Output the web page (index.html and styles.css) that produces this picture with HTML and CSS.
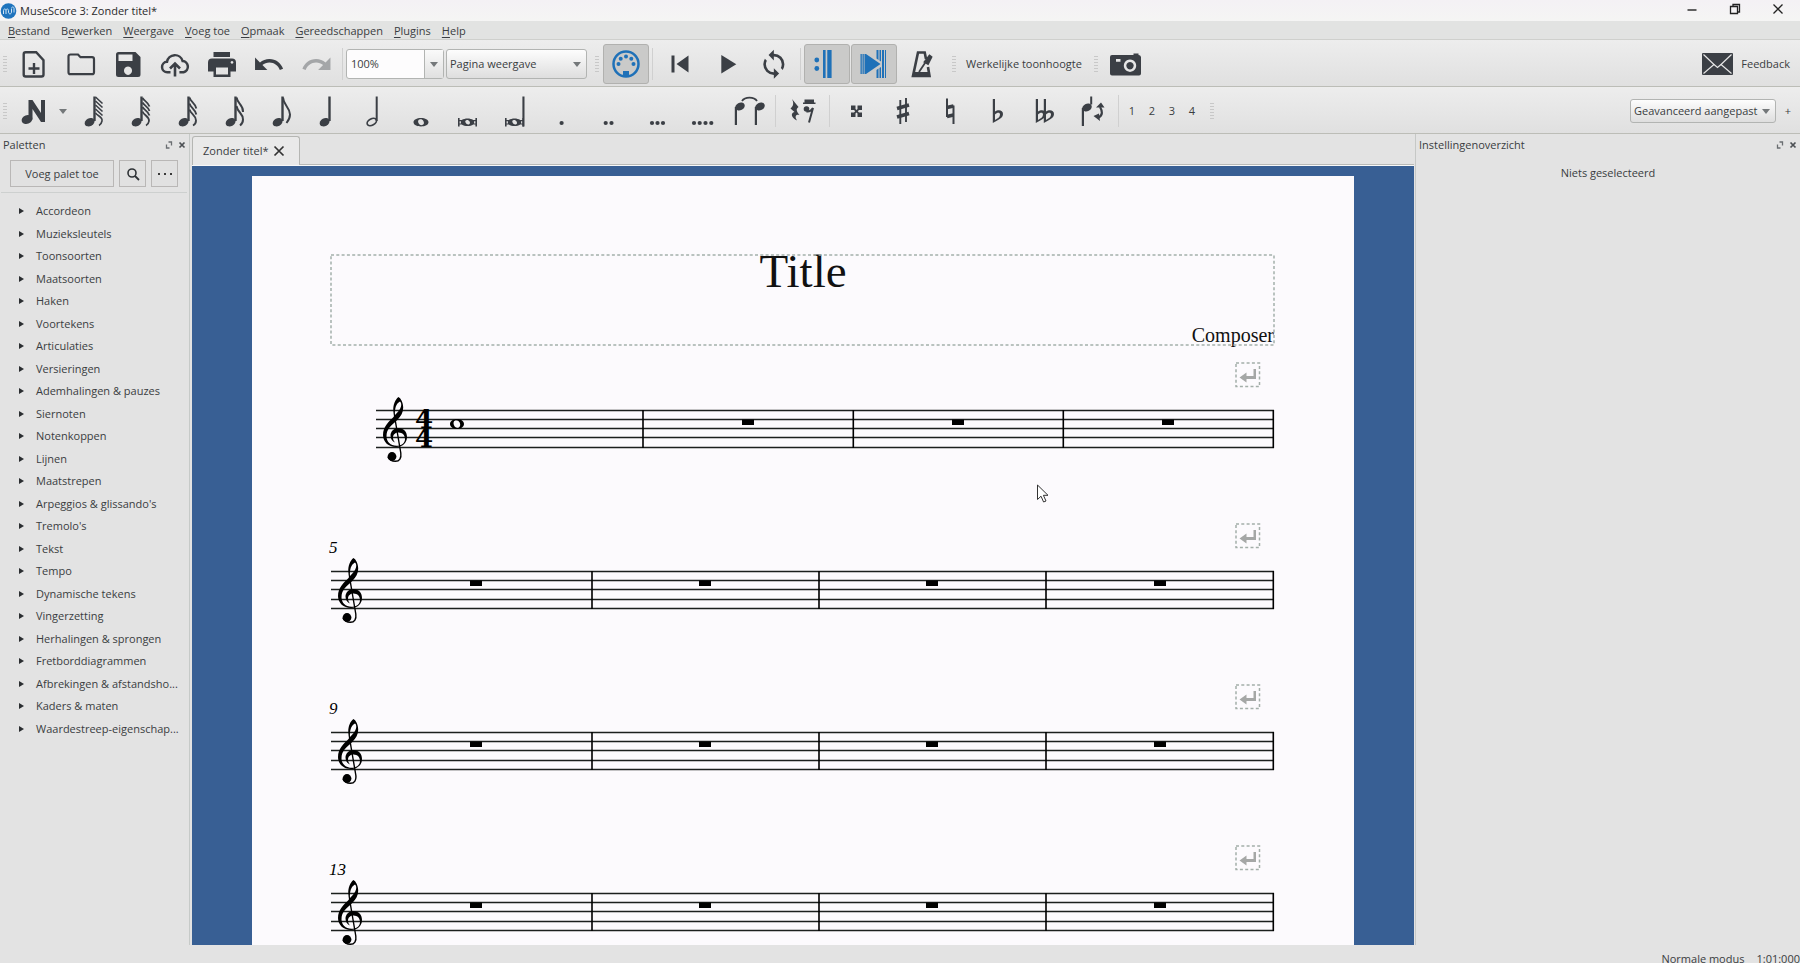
FILE: index.html
```html
<!DOCTYPE html>
<html lang="nl">
<head>
<meta charset="utf-8">
<title>MuseScore 3: Zonder titel*</title>
<link rel="stylesheet" href="styles.css">
</head>
<body>
<svg class="defs" aria-hidden="true">
  <symbol id="head" viewBox="0 0 47 46"><ellipse cx="18.600" cy="34.200" rx="5.200" ry="3.900" transform="rotate(-28 18.600 34.200)"/><path d="M22.300 8.500h2.400V33h-2.400z"/></symbol>
  <symbol id="brevis" viewBox="0 0 47 46"><path fill-rule="evenodd" d="M11 30h1.600v2h2.200c3-2 8.500-2 11.400 0h2.200v-2H30v8.500h-1.600v-2h-2.200c-3 2-8.400 2-11.400 0h-2.200v2H11zM12.600 33.200v2.200h1.300v-2.200zM27.100 33.200v2.200h1.300v-2.200zM19.800 32c-1.600.3-1.900 1.500-1.100 2.700.7 1.200 1.700 1.900 2.900 1.700 1.500-.3 1.700-1.600 1-2.800-.7-1.100-1.600-1.800-2.800-1.600z"/></symbol>
  <symbol id="dock" viewBox="0 0 8 8"><path d="M3.500 1h3v3.500M4.500 7H1.500V3.500" fill="none" stroke="#6a6e71" stroke-width="1.300"/></symbol>
  <symbol id="cross" viewBox="0 0 8 8"><path d="M1.500 1.500l5 5M6.500 1.500l-5 5" stroke="#4c5054" stroke-width="1.700"/></symbol>
  <symbol id="flat" viewBox="0 0 12 26"><path d="M.8 1h2.200v12.500c3-2 8-1.800 8 2.500 0 4.500-5.500 6-10.200 9zM3 16.500v5.500c2.800-1.500 5-3 5-5.500 0-2.500-3-2.200-5 0z" fill-rule="evenodd"/></symbol>
  <symbol id="clef" viewBox="0 0 24 66">
    <path fill-rule="evenodd" d="M15.500 0C12 2.500 10 8 10.300 13.500c.1 2 .4 4 .7 6C6 24.500 0 29.500 0 38c0 7 5.500 12 13 12 6.500 0 11-4 11-10 0-5.500-3.500-9-8.500-9-4.500 0-8 3.500-8 7.500 0 3.500 2 6 4.500 7-1.500-1.700-2-3.500-2-5 0-3 2.500-5 5.500-5 4 0 6.500 2.800 6.500 6.500 0 4-3.500 6.800-8.500 6.800C7.500 48.800 3.500 44.500 3.500 39.500 3.500 31.500 8.500 28.500 14.300 23c3.700-4 5.900-7.500 5.900-12.500 0-5-2.200-9-4.700-10.500zM17 4.500c1.300 1 1.500 3 1 5-.7 3-3.500 6-6 8.500-.4-6.500 1-11.500 5-13.500z"/>
    <path d="M11.500 19l6.300 37c.7 5-1.300 8.300-5.300 8.300-3.500 0-6.500-1.800-7.500-4.300" fill="none" stroke="#000" stroke-width="1.400"/>
    <circle cx="9" cy="59.500" r="4.400"/>
  </symbol>
  <symbol id="break" viewBox="0 0 26 26"><rect x="1" y="1" width="23.500" height="23.500" fill="none" stroke="#a3aea9" stroke-width="1.500" stroke-dasharray="3 2.300"/><path d="M4.500 15.500l7-5v3.500h7V7h2.500v10h-9.500v3.500z" fill="#a5a7a6"/></symbol>
  <symbol id="later" viewBox="0 0 944 161">
    <path d="M0 64.500h943M0 73.500h943M0 82.500h943M0 92.500h943M0 101.500h943" stroke="#1b1f1d" stroke-width="1.300"/>
    <path d="M261 64v38M488 64v38M715 64v38M942.300 64v38" stroke="#000" stroke-width="1.600"/>
    <path d="M139 73.500h12v5.500h-12zM368 73.500h12v5.500h-12zM595 73.500h12v5.500h-12zM823 73.500h12v5.500h-12z"/>
    <use href="#clef" x="7" y="51" width="24" height="66"/>
    <use href="#break" x="904" y="16" width="26" height="26"/>
  </symbol>
</svg>

<header class="titlebar">
  <svg class="logo" width="17" height="16" viewBox="0 0 17 16"><circle cx="8.500" cy="8" r="7.800" fill="#1f74bd"/><path d="M3.500 11V7.500c0-2 2.500-2 2.500 0V11M6 7.500c0-2 2.500-2 2.500 0v1.500c0 2.500 3 2.500 3 0V6M11.500 5.500c0-2 2.500-2 2.500 0V9.500" fill="none" stroke="#cfe4f5" stroke-width="1"/></svg>
  <h1 class="app-title">MuseScore 3: Zonder titel*</h1>
  <div class="window-buttons">
    <button aria-label="Minimaliseren"><svg width="12" height="12"><path d="M1.500 7h9" stroke="#222" stroke-width="1.400"/></svg></button>
    <button aria-label="Herstellen"><svg width="12" height="12"><path d="M1.500 3.500h7v7h-7zM4 3.500V1.500h6.500V9H9" fill="none" stroke="#222" stroke-width="1.300"/></svg></button>
    <button aria-label="Sluiten"><svg width="12" height="12"><path d="M1.500 1.500l9 9M10.500 1.500l-9 9" stroke="#222" stroke-width="1.300"/></svg></button>
  </div>
</header>

<nav class="menubar">
  <button><u>B</u>estand</button><button>B<u>e</u>werken</button><button><u>W</u>eergave</button><button><u>V</u>oeg toe</button><button><u>O</u>pmaak</button><button><u>G</u>ereedschappen</button><button><u>P</u>lugins</button><button><u>H</u>elp</button>
</nav>

<div class="toolbar">
  <i class="handle"></i>
  <button class="tool" aria-label="Nieuw"><svg viewBox="0 0 47 46"><g fill="none" stroke="#3b3f45" stroke-width="2.400"><path d="M15.700 11.200h10.500l7.300 8v14.300a2 2 0 0 1-2 2H15.700a2 2 0 0 1-2-2V13.200a2 2 0 0 1 2-2z"/><path d="M24 22v11M18.500 27.500h11"/></g></svg></button>
  <button class="tool" aria-label="Openen"><svg viewBox="0 0 47 46"><path d="M13.500 13.500h7.500l2.500 2.700h11.500a2 2 0 0 1 2 2v13a2 2 0 0 1-2 2H13.500a2 2 0 0 1-2-2V15.500a2 2 0 0 1 2-2z" fill="none" stroke="#3b3f45" stroke-width="2.200"/></svg></button>
  <button class="tool" aria-label="Opslaan"><svg viewBox="0 0 47 46"><path fill-rule="evenodd" d="M14.500 11h17l5 5v17.500a2.500 2.500 0 0 1-2.500 2.500H14.500a2.500 2.500 0 0 1-2.500-2.500v-20a2.500 2.500 0 0 1 2.500-2.500zM14.500 13.500v6.500h14v-6.500zM24 25.500a4 4.200 0 1 0 .01 0z"/></svg></button>
  <button class="tool" aria-label="Online opslaan"><svg viewBox="0 0 47 46"><path d="M19.500 31.200h-3a5.200 5.200 0 0 1-.5-10.400 8 8 0 0 1 15.600-.8 5.700 5.700 0 0 1 1 11.200h-4.200" fill="none" stroke="#3b3f45" stroke-width="2.500"/><path d="M24 35.500V23M19 27.500l5-5 5 5" fill="none" stroke="#3b3f45" stroke-width="2.600"/></svg></button>
  <button class="tool" aria-label="Afdrukken"><svg viewBox="0 0 47 46"><path fill-rule="evenodd" d="M15.500 11h16.500v5H15.500zM14 17.500h20a4 4 0 0 1 4 4v9h-5.500v5.500h-17v-5.500H10v-9a4 4 0 0 1 4-4zM18 26.500v7h12v-7zM34 20a1.400 1.400 0 1 0 .01 0z"/></svg></button>
  <button class="tool" aria-label="Ongedaan maken"><svg viewBox="0 0 47 46"><path transform="translate(7.300 7) scale(1.370)" d="M12.500 8C9.850 8 7.450 9 5.600 10.600L2 7v9h9l-3.620-3.620C8.770 11.220 10.540 10.500 12.500 10.500c3.540 0 6.550 2.310 7.600 5.500l2.370-.78C21.080 11.030 17.150 8 12.500 8z"/></svg></button>
  <button class="tool" aria-label="Opnieuw"><svg viewBox="0 0 47 46"><path fill="#a4a6a8" transform="translate(41.200 7) scale(-1.370 1.370)" d="M12.500 8C9.850 8 7.450 9 5.600 10.600L2 7v9h9l-3.620-3.620C8.770 11.220 10.540 10.500 12.500 10.500c3.540 0 6.550 2.310 7.600 5.500l2.370-.78C21.080 11.030 17.150 8 12.500 8z"/></svg></button>
  <i class="sep"></i>
  <div class="zoom"><input type="text" value="100%" aria-label="Zoom"><button class="drop" aria-label="Zoomniveaus"></button></div>
  <label class="pick view"><select aria-label="Weergave"><option>Pagina weergave</option></select></label>
  <i class="handle far"></i>
  <button class="tool on" aria-label="MIDI-invoer"><svg viewBox="0 0 46 46"><circle cx="23" cy="23" r="12.500" fill="none" stroke="#1f71b8" stroke-width="2.500"/><g fill="#1f71b8"><circle cx="15.500" cy="23" r="2"/><circle cx="17.700" cy="17.700" r="2"/><circle cx="23" cy="15.500" r="2"/><circle cx="28.300" cy="17.700" r="2"/><circle cx="30.500" cy="23" r="2"/><path d="M20 30h6v5.500h-6z"/></g></svg></button>
  <i class="sep"></i>
  <button class="tool" aria-label="Terugspoelen"><svg viewBox="0 0 47 46"><path d="M15.500 14.500h3v17h-3zM32.500 14.500v17L20.500 23z"/></svg></button>
  <button class="tool" aria-label="Afspelen"><svg viewBox="0 0 47 46"><path d="M18.300 14l15 9.300-15 9.300z"/></svg></button>
  <button class="tool" aria-label="Lus"><svg viewBox="0 0 47 46"><path transform="translate(8 7.500) scale(1.320)" d="M12 18a6 6 0 0 1-6-6c0-1 .25-1.970.7-2.800L5.240 7.740A7.900 7.900 0 0 0 4 12a8 8 0 0 0 8 8v3l4-4-4-4zM12 4V1L8 5l4 4V6a6 6 0 0 1 6 6c0 1-.25 1.970-.7 2.800l1.460 1.460A7.900 7.900 0 0 0 20 12a8 8 0 0 0-8-8z"/></svg></button>
  <i class="sep"></i>
  <button class="tool on" aria-label="Herhalingen"><svg viewBox="0 0 46 46"><g fill="#1f71b8"><circle cx="12.800" cy="19" r="2.400"/><circle cx="12.800" cy="27.500" r="2.400"/><path d="M19 9h2.600v28H19zM23.300 9h4.300v28h-4.300z"/></g></svg></button>
  <button class="tool on next" aria-label="Meeschuiven"><svg viewBox="0 0 46 46"><g fill="#1f71b8"><path d="M15 13l14.500 10L15 33zM9.500 13h1.300v20H9.500zM11.500 13h1.300v20h-1.300zM13.500 13h1.500v20h-1.500zM25.500 9h2v10l-2-1.500zM28.500 9h1.500v11.500l-1.500-1zM25.500 29l2-1.500V37h-2zM28.500 27l1.500-1v11h-1.500zM31 9h2v28h-2zM34 9h1v28h-1z"/></g></svg></button>
  <button class="tool" aria-label="Metronoom"><svg viewBox="0 0 47 46"><path fill="none" stroke="#3b3f45" stroke-width="2.600" d="M29 18l-1.300-6.500H21L16 35h16.500L31 26"/><path d="M22 31l8-12M32.500 14.500l2 1.500-3.500 7-3.500-2z" stroke="#3b3f45" stroke-width="1.800"/><path d="M17 31h14v5H17z"/></svg></button>
  <i class="handle far"></i>
  <button class="text-tool">Werkelijke toonhoogte</button>
  <i class="handle far"></i>
  <button class="tool" aria-label="Schermafdruk"><svg viewBox="0 0 47 46"><path fill-rule="evenodd" d="M10 14h21.500v-1.500h5V14a2.500 2.500 0 0 1 2.500 2v16.500a2 2 0 0 1-2 2H10a2 2 0 0 1-2-2V16a2 2 0 0 1 2-2zM14 18v2.800h4.500V18zM28 18.500a6.200 6.200 0 1 0 .01 0zM28 21a3.700 3.700 0 1 1-.01 0z"/></svg></button>
  <button class="feedback"><svg width="31" height="22" viewBox="0 0 31 22"><rect width="31" height="22" rx="1"/><path d="M1.500 1.500L12 11.500 1.500 20.500M29.500 1.500L19 11.500l10.500 9M12 11.500l3.500 3 3.500-3" fill="none" stroke="#e6e6e6" stroke-width="1.200"/></svg>Feedback</button>
</div>

<div class="toolbar">
  <i class="handle"></i>
  <button class="tool input" aria-label="Nootinvoer"><svg viewBox="0 0 47 46"><ellipse cx="17" cy="31.500" rx="5.500" ry="4.300" transform="rotate(-20 17 31.500)"/><path d="M18.500 12h4l8.500 13V12h4v22h-4l-8.500-13v10.500h-4z"/></svg></button>
  <button class="drop small" aria-label="Invoermodus"></button>
  <button class="tool" aria-label="128e"><svg viewBox="0 0 47 46"><use href="#head"/><path d="M24.500 9l7 6.500M24.500 13l7 6.500M24.500 17l7 6.500M24.500 21l7 6.500M24.500 25c2 3 7.500 4 6.500 8-.3 1.500-1 3.500-3 4.500" fill="none" stroke="#3b3f45" stroke-width="1.600"/></svg></button>
  <button class="tool" aria-label="64e"><svg viewBox="0 0 47 46"><use href="#head"/><path d="M24.500 10c1.500 3 5.500 4 7 8.500M24.500 14.500c1.500 3 5.500 4 7 8.500M24.500 19c1.500 3 5.500 4 7 8.500M24.500 23.500c1.500 4 7 5 6.500 9.500-.2 1.500-1 3.500-3 4.500" fill="none" stroke="#3b3f45" stroke-width="1.800"/></svg></button>
  <button class="tool" aria-label="32e"><svg viewBox="0 0 47 46"><use href="#head"/><path d="M24.500 9.500c1 4.500 5.500 5 6.800 11M24.500 15.500c1 4.500 5.500 5 6.800 11M24.500 21.500c1 4.500 6.500 5.500 6.500 11 0 2-1 4-3 5" fill="none" stroke="#3b3f45" stroke-width="1.900"/></svg></button>
  <button class="tool" aria-label="16e"><svg viewBox="0 0 47 46"><use href="#head"/><path d="M24.500 9.500c1 6.500 7 7 6.500 14.500M24.500 18c1 6.500 6.500 7 6.500 13.500 0 2.500-1 4.500-3 6" fill="none" stroke="#3b3f45" stroke-width="2"/></svg></button>
  <button class="tool" aria-label="8e"><svg viewBox="0 0 47 46"><use href="#head"/><path d="M24 9.500c.5 8 6.500 9 7 17 0 3.500-1.500 6-3.500 8.500" fill="none" stroke="#3b3f45" stroke-width="2"/></svg></button>
  <button class="tool" aria-label="Kwart"><svg viewBox="0 0 47 46"><use href="#head"/></svg></button>
  <button class="tool" aria-label="Halve"><svg viewBox="0 0 47 46"><ellipse cx="18.800" cy="34" rx="5" ry="3.200" transform="rotate(-28 18.800 34)" fill="none" stroke="#3b3f45" stroke-width="1.700"/><path d="M22.700 8.500h2V33h-2z"/></svg></button>
  <button class="tool" aria-label="Hele"><svg viewBox="0 0 47 46"><path fill-rule="evenodd" d="M21 30c4.200 0 7.500 1.800 7.500 4.200S25.200 38.400 21 38.400s-7.500-1.800-7.500-4.200S16.800 30 21 30zM20 31.300c-2 .4-2.400 2.400-1.400 4 .8 1.500 2 2 3.600 1.800 1.700-.4 2.200-2.300 1.300-3.900-.8-1.500-2-2.100-3.500-1.900z"/></svg></button>
  <button class="tool" aria-label="Brevis"><svg viewBox="0 0 47 46"><use href="#brevis"/></svg></button>
  <button class="tool" aria-label="Longa"><svg viewBox="0 0 47 46"><use href="#brevis"/><path d="M28.400 8.500h2.100v30h-2.100z"/></svg></button>
  <button class="tool" aria-label="Punt"><svg viewBox="0 0 47 46"><circle cx="20.600" cy="35" r="2.100"/></svg></button>
  <button class="tool" aria-label="Dubbele punt"><svg viewBox="0 0 47 46"><circle cx="17.700" cy="35" r="2.100"/><circle cx="23.500" cy="35" r="2.100"/></svg></button>
  <button class="tool" aria-label="Drie punten"><svg viewBox="0 0 47 46"><circle cx="17" cy="35" r="2.100"/><circle cx="22.500" cy="35" r="2.100"/><circle cx="28" cy="35" r="2.100"/></svg></button>
  <button class="tool" aria-label="Vier punten"><svg viewBox="0 0 47 46"><circle cx="12" cy="35" r="2.100"/><circle cx="17.700" cy="35" r="2.100"/><circle cx="23.500" cy="35" r="2.100"/><circle cx="29.300" cy="35" r="2.100"/></svg></button>
  <button class="tool narrow" aria-label="Overbinding"><svg viewBox="0 0 47 46"><ellipse cx="11" cy="18.500" rx="5" ry="3.800" transform="rotate(-28 11 18.500)"/><ellipse cx="31" cy="18.500" rx="5" ry="3.800" transform="rotate(-28 31 18.500)"/><path d="M5.800 19H8v18H5.800zM25.800 19H28v18h-2.200z"/><path d="M13 13c3-4.500 12-4.500 15 0" fill="none" stroke="#3b3f45" stroke-width="1.800"/></svg></button>
  <i class="sep"></i>
  <button class="tool" aria-label="Rust"><svg viewBox="0 0 47 46"><path d="M13 11l6.500 8c-2.500 2-2.500 3.500 1 8-3-.8-5.500 1-2.500 5.500-5.500-2.500-7-7.500-2.500-8.500l-4-3.500c3-2.500 3.500-5.500 1.500-9.500z"/><path d="M25.500 11.500H35v4h-9.500zM24 14.500h12.500v1.600H24z"/><circle cx="27.500" cy="21" r="2.800"/><path d="M27.500 23.500c3 .5 5-1 6.500-3.500L30 34.500" fill="none" stroke="#3b3f45" stroke-width="2"/></svg></button>
  <i class="sep"></i>
  <button class="tool" aria-label="Dubbelkruis"><svg viewBox="0 0 47 46"><path d="M18 17.500h4.500V21l1 1 1-1v-3.500H29V22h-3l-1.200 1.200L26 24.500h3V29h-4.500v-3.500l-1-1-1 1V29H18v-4.500h3l1.200-1.300L21 22h-3z"/></svg></button>
  <button class="tool" aria-label="Kruis"><svg viewBox="0 0 47 46"><path d="M20.300 12v24M26 10v24" fill="none" stroke="#3b3f45" stroke-width="1.900"/><path d="M17 20.500l12-3.500M17 29l12-3.500" stroke="#3b3f45" stroke-width="3.500"/></svg></button>
  <button class="tool" aria-label="Herstellingsteken"><svg viewBox="0 0 47 46"><path d="M20 10.500v18.500M26.500 17.500V36" fill="none" stroke="#3b3f45" stroke-width="2"/><path d="M20 19.500l6.500-1.500M20 28.500l6.500-1.500" stroke="#3b3f45" stroke-width="3.500"/></svg></button>
  <button class="tool" aria-label="Mol"><svg viewBox="0 0 47 46"><use href="#flat" x="18" y="10" width="12" height="26"/></svg></button>
  <button class="tool" aria-label="Dubbelmol"><svg viewBox="0 0 47 46"><use href="#flat" x="14" y="10" width="12" height="26"/><use href="#flat" x="22" y="10" width="12" height="26"/></svg></button>
  <button class="tool" aria-label="Stok omdraaien"><svg viewBox="0 0 47 46"><ellipse cx="19" cy="19.500" rx="5" ry="3.800" transform="rotate(-28 19 19.500)"/><path d="M13.800 20H16v18h-2.200zM22.200 8.500H24.200v8h-2z"/><path d="M32 19c2.500 4 3 8-1.500 10.500" fill="none" stroke="#3b3f45" stroke-width="2.200"/><path d="M28 19.500l5-5 3.500 5zM25.500 28l5.500-2.500 1 7.500z"/></svg></button>
  <i class="sep"></i>
  <button class="voice">1</button><button class="voice">2</button><button class="voice">3</button><button class="voice">4</button>
  <i class="handle far"></i>
  <label class="pick space"><select aria-label="Werkruimte"><option>Geavanceerd aangepast</option></select></label>
  <button class="plus" aria-label="Werkruimte toevoegen">+</button>
</div>

<main class="work">
  <aside class="palettes">
    <div class="dock-head"><h2>Paletten</h2><button aria-label="Losmaken"><svg width="8" height="8"><use href="#dock"/></svg></button><button aria-label="Sluiten"><svg width="8" height="8"><use href="#cross"/></svg></button></div>
    <div class="palette-actions">
      <button class="add">Voeg palet toe</button>
      <button class="square" aria-label="Zoeken"><svg width="14" height="14"><circle cx="6" cy="6" r="4" fill="none" stroke="#2e3236" stroke-width="1.600"/><path d="M9 9l4 4" stroke="#2e3236" stroke-width="1.800"/></svg></button>
      <button class="square" aria-label="Meer"><svg width="16" height="4"><circle cx="2" cy="2" r="1"/><circle cx="8" cy="2" r="1"/><circle cx="14" cy="2" r="1"/></svg></button>
    </div>
    <ul class="tree">
      <li>Accordeon</li><li>Muzieksleutels</li><li>Toonsoorten</li><li>Maatsoorten</li><li>Haken</li><li>Voortekens</li><li>Articulaties</li><li>Versieringen</li><li>Ademhalingen &amp; pauzes</li><li>Siernoten</li><li>Notenkoppen</li><li>Lijnen</li><li>Maatstrepen</li><li>Arpeggios &amp; glissando's</li><li>Tremolo's</li><li>Tekst</li><li>Tempo</li><li>Dynamische tekens</li><li>Vingerzetting</li><li>Herhalingen &amp; sprongen</li><li>Fretborddiagrammen</li><li>Afbrekingen &amp; afstandsho...</li><li>Kaders &amp; maten</li><li>Waardestreep-eigenschap...</li>
    </ul>
  </aside>

  <section class="document">
    <div class="tabs"><div class="tab">Zonder titel*<button aria-label="Tab sluiten"><svg width="12" height="12"><path d="M1.500 1.500l9 9M10.500 1.500l-9 9" stroke="#333" stroke-width="1.700"/></svg></button></div></div>
    <div class="canvas">
      <article class="page">
        <div class="title-frame">
          <svg class="frame-line" aria-hidden="true"><rect x="0" y="0" width="100%" height="100%"/></svg>
          <h2>Title</h2>
          <p>Composer</p>
        </div>
        <svg class="system" viewBox="0 0 944 161">
          <path d="M45 64.500h898M45 73.500h898M45 82.500h898M45 91.500h898M45 101.500h898" stroke="#1b1f1d" stroke-width="1.300"/>
          <path d="M312 64v38M522.300 64v38M732.300 64v38M942.300 64v38" stroke="#000" stroke-width="1.600"/>
          <path d="M411 73.500h12v5.500h-12zM621 73.500h12v5.500h-12zM831 73.500h12v5.500h-12z"/>
          <use href="#clef" x="52" y="51" width="24" height="66"/>
          <text class="meter"><tspan x="93" y="82">4</tspan><tspan x="93" y="101">4</tspan></text>
          <path fill-rule="evenodd" d="M126 73c4 0 7 2.200 7 5s-3 5-7 5-7-2.200-7-5 3-5 7-5zM124.500 74.200c-2 .4-2.400 2.900-1.500 5 .9 2.100 2.500 3 4.200 2.700 2-.5 2.500-3.200 1.500-5.300-.9-1.900-2.400-2.700-4.200-2.400z"/>
          <use href="#break" x="904" y="16" width="26" height="26"/>
        </svg>
        <svg class="system" viewBox="0 0 944 161"><use href="#later"/><text x="-2" y="46">5</text></svg>
        <svg class="system" viewBox="0 0 944 161"><use href="#later"/><text x="-2" y="46">9</text></svg>
        <svg class="system" viewBox="0 0 944 161"><use href="#later"/><text x="-2" y="46">13</text></svg>
        <svg class="cursor" width="14" height="20" aria-hidden="true"><path d="M1.500 1v14.500l3.500-3.300 2.600 5.800 2.400-1-2.600-5.700h4.600z" fill="#fff" stroke="#333" stroke-width="1"/></svg>
      </article>
    </div>
  </section>

  <aside class="inspector">
    <div class="dock-head"><h2>Instellingenoverzicht</h2><button aria-label="Losmaken"><svg width="8" height="8"><use href="#dock"/></svg></button><button aria-label="Sluiten"><svg width="8" height="8"><use href="#cross"/></svg></button></div>
    <p>Niets geselecteerd</p>
  </aside>
</main>

<footer class="status"><span>Normale modus</span><span>1:01:000</span></footer>
</body>
</html>
```

FILE: styles.css
```css
* { box-sizing: border-box; }
body {
  margin: 0;
  height: 100vh;
  display: flex;
  flex-direction: column;
  overflow: hidden;
  background: #e3e3e3;
  color: #3a3d41;
  font: 11px/16px "Open Sans", "Noto Sans", sans-serif;
}
button {
  display: flex;
  align-items: center;
  justify-content: center;
  margin: 0;
  padding: 0;
  border: 0;
  background: none;
  color: inherit;
  font: inherit;
}
h1, h2, p, ul { margin: 0; padding: 0; font: inherit; }
svg { display: block; }
.defs { position: absolute; width: 0; height: 0; }

.titlebar {
  display: flex;
  align-items: center;
  flex: 0 0 21px;
  background: linear-gradient(#f4f1f5, #f5f5f4);
}
.app-title { margin-left: 3px; color: #2b2b2b; }
.window-buttons { display: flex; gap: 31px; margin: 0 16px 3px auto; }

.menubar {
  display: flex;
  gap: 11px;
  flex: 0 0 19px;
  padding: 2px 8px 0;
  border-bottom: 1px solid #cfd0cd;
  background: #e2e3e2;
}
.menubar u { text-underline-offset: 2px; }

.toolbar {
  display: flex;
  align-items: center;
  flex: 0 0 47px;
  padding-top: 2px;
  border-bottom: 1px solid #bcbdb7;
  background: linear-gradient(#ededed, #e0e0e0);
}
.toolbar > * { flex-shrink: 0; }
.handle {
  width: 4px;
  height: 18px;
  margin: 0 3px;
  background: radial-gradient(circle, #c8c8c8 40%, transparent 60%) 0 0 / 2px 3px;
}
.handle.far { margin: 0 4px 0 8px; }
.tool { width: 47px; height: 44px; }
.tool svg { flex: none; width: 47px; height: 46px; fill: #3b3f45; }
.tool.on {
  width: 46px;
  height: 40px;
  border: 1px solid #b1b1af;
  border-radius: 3px;
  background: #cacac9;
}
.tool.on svg { width: 46px; }
.tool.next { margin-left: 1px; }
.tool.narrow { width: 43px; justify-content: flex-start; }
.sep { width: 1px; height: 32px; margin: 0 3px; background: #d0d0d0; }
.zoom {
  display: flex;
  width: 98px;
  height: 30px;
  margin-right: 2px;
  border: 1px solid #b2b4b2;
  border-radius: 3px;
  background: #fdfcfd;
}
.zoom input {
  flex: 1;
  min-width: 0;
  padding: 0 4px;
  border: 0;
  background: none;
  color: inherit;
  font: inherit;
}
.drop { width: 19px; border-left: 1px solid #b2b4b2; background: linear-gradient(#fafafa, #e0e0e0); }
.drop::after, .pick::after {
  content: "";
  border: 4px solid transparent;
  border-top: 5px solid #74787a;
  border-bottom: 0;
}
.drop.small { width: 16px; border: 0; background: none; }
.input { margin-right: -2px; }
.pick {
  display: grid;
  align-items: center;
  border: 1px solid #b2b4b2;
  border-radius: 3px;
  background: linear-gradient(#fdfdfd, #dedede);
}
.pick select, .pick::after { grid-area: 1 / 1; }
.pick::after { justify-self: end; margin-right: 5px; pointer-events: none; }
.pick select {
  height: 100%;
  width: 100%;
  padding: 0 3px;
  border: 0;
  appearance: none;
  background: none;
  color: inherit;
  font: inherit;
}
.view { width: 141px; height: 30px; }
.space { width: 146px; height: 24px; margin-left: auto; }
.text-tool { margin: 0 4px 0 6px; }
.feedback { gap: 8px; margin: 0 10px 0 auto; }
.feedback svg { fill: #3b3f45; }
.voice { width: 20px; height: 24px; }
.plus { width: 24px; height: 24px; }

.work { display: flex; flex: 1; min-height: 0; }
.palettes { flex: 0 0 190px; border-right: 1px solid #c6cac8; }
.dock-head { display: flex; align-items: center; gap: 5px; height: 22px; padding: 0 3px; }
.dock-head h2 { flex: 1; }
.palettes .dock-head { margin-bottom: 4px; }
.palette-actions {
  display: flex;
  gap: 5px;
  padding: 0 9px 5px;
  margin: 0 2px 0 1px;
  border-bottom: 1px solid #cdd0cf;
}
.palette-actions button { height: 27px; border: 1px solid #b9b7b6; background: #e1e1e1; }
.palette-actions .add { flex: 1; }
.palette-actions .square { flex: 0 0 27px; }
.tree { padding: 7px 0 0 19px; list-style: none; }
.tree li { display: flex; align-items: center; gap: 12px; height: 22px; white-space: nowrap; }
.tree li:nth-child(even) { height: 23px; }
.tree li::before {
  content: "";
  border: 3px solid transparent;
  border-left: 5px solid #2a2d30;
  border-right: 0;
}

.document { display: flex; flex-direction: column; flex: 1; min-width: 0; padding: 0 1px 0 2px; }
.tabs {
  flex: 0 0 32px;
  padding-top: 2px;
  border-bottom: 1px solid #f8f8f8;
  box-shadow: inset 0 -1px #b9bab7;
}
.tab {
  display: inline-flex;
  align-items: center;
  gap: 4px;
  height: 29px;
  padding: 0 14px 0 10px;
  border: 1px solid #b5b6b3;
  border-bottom: 0;
  border-radius: 3px 3px 0 0;
  background: #e9e9e9;
}
.canvas { flex: 1; min-height: 0; overflow: hidden; padding: 10px 60px 0; background: #385f94; }
.page { position: relative; min-height: 100%; padding: 78px 79px 0; background: #fcfafd; color: #111; }
.title-frame {
  position: relative;
  height: 92px;
  display: flex;
  flex-direction: column;
  justify-content: space-between;
  text-align: center;
  font-family: "Liberation Serif", serif;
}
.frame-line { position: absolute; top: 1px; left: 0; width: calc(100% - 1px); height: 90px; overflow: visible; }
.frame-line rect { fill: none; stroke: #a3b0aa; stroke-width: 1.500; stroke-dasharray: 3 2.300; }
.title-frame h2 { font-size: 47px; line-height: 34px; }
.title-frame p { padding-right: 1px; font-size: 20px; line-height: 22px; text-align: right; }
.system { width: 100%; overflow: visible; }
.system text { font: italic 17px "Liberation Serif", serif; }
.system .meter { font: bold 26px "DejaVu Serif", serif; text-anchor: middle; }
.cursor { position: absolute; left: 784px; top: 308px; }

.inspector { flex: 0 0 385px; border-left: 1px solid #c6c8c6; }
.inspector p { padding-top: 9px; text-align: center; }
.status {
  display: flex;
  justify-content: flex-end;
  gap: 12px;
  flex: 0 0 18px;
  height: 18px;
  min-height: 0;
  padding-top: 6px;
}
```
